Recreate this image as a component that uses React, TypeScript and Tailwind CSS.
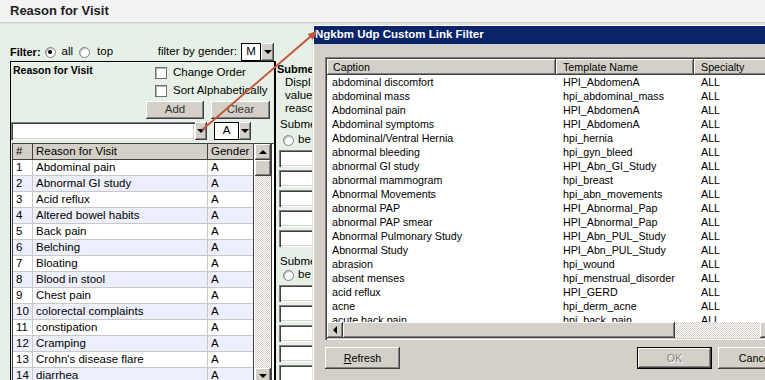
import React from "react";

const raised =
  "bg-[#d4d0c8] shadow-[inset_-1px_-1px_#404040,inset_1px_1px_#ffffff,inset_-2px_-2px_#808080]";
const sunken =
  "bg-white shadow-[inset_1px_1px_#808080,inset_2px_2px_#404040,inset_-1px_-1px_#ffffff,inset_-2px_-2px_#d4d0c8]";
const dither =
  "bg-[repeating-conic-gradient(#d4d0c8_0%_25%,#ffffff_0%_50%)] bg-[length:2px_2px]";

const reasons = [
  "Abdominal pain",
  "Abnormal GI study",
  "Acid reflux",
  "Altered bowel habits",
  "Back pain",
  "Belching",
  "Bloating",
  "Blood in stool",
  "Chest pain",
  "colorectal complaints",
  "constipation",
  "Cramping",
  "Crohn's disease flare",
  "diarrhea",
];

const links: [string, string][] = [
  ["abdominal discomfort", "HPI_AbdomenA"],
  ["abdominal mass", "hpi_abdominal_mass"],
  ["Abdominal pain", "HPI_AbdomenA"],
  ["Abdominal symptoms", "HPI_AbdomenA"],
  ["Abdominal/Ventral Hernia", "hpi_hernia"],
  ["abnormal bleeding", "hpi_gyn_bleed"],
  ["abnormal GI study", "HPI_Abn_GI_Study"],
  ["abnormal mammogram", "hpi_breast"],
  ["Abnormal Movements", "hpi_abn_movements"],
  ["abnormal PAP", "HPI_Abnormal_Pap"],
  ["abnormal PAP smear", "HPI_Abnormal_Pap"],
  ["Abnormal Pulmonary Study", "HPI_Abn_PUL_Study"],
  ["Abnormal Study", "HPI_Abn_PUL_Study"],
  ["abrasion", "hpi_wound"],
  ["absent menses", "hpi_menstrual_disorder"],
  ["acid reflux", "HPI_GERD"],
  ["acne", "hpi_derm_acne"],
  ["acute back pain", "hpi_back_pain"],
];

function Radio({ checked = false, className = "" }: { checked?: boolean; className?: string }) {
  return (
    <span
      className={`inline-flex h-[11px] w-[11px] shrink-0 items-center justify-center rounded-full border border-[#808080] bg-white shadow-[inset_1px_1px_#bdbdbd] ${className}`}
    >
      {checked && <span className="h-[4px] w-[4px] rounded-full bg-black" />}
    </span>
  );
}

function Checkbox() {
  return <span className="h-[12px] w-[12px] shrink-0 border border-[#6e6e6e] bg-white shadow-[inset_1px_1px_#b5b5b5]" />;
}

const TriDown = () => <span className="h-0 w-0 border-x-[4px] border-t-[4px] border-x-transparent border-t-black" />;
const TriUp = () => <span className="h-0 w-0 border-x-[4px] border-b-[4px] border-x-transparent border-b-black" />;
const TriLeft = () => <span className="h-0 w-0 border-y-[4px] border-r-[4px] border-y-transparent border-r-black" />;
const TriRight = () => <span className="h-0 w-0 border-y-[4px] border-l-[4px] border-y-transparent border-l-black" />;

function DropBtn({ className = "" }: { className?: string }) {
  return (
    <div className={`${raised} flex shrink-0 items-center justify-center ${className}`}>
      <TriDown />
    </div>
  );
}

export default function App() {
  return (
    <div className="relative h-[380px] w-[765px] overflow-hidden bg-[#e6f0e6] font-['Liberation_Sans',Arial,sans-serif] text-black">
      {/* page header */}
      <div className="flex h-[22px] items-center bg-[#f4f2f5] pl-[10px] text-[13px] font-bold text-[#1e1e1e]">
        Reason for Visit
      </div>
      <div className="h-[2px] bg-gradient-to-b from-[#cbc9cc] to-[#e4e2e5]" />

      <div className="pl-[10px]">
        {/* filter row */}
        <div className="mt-[19px] flex h-[18px] w-[264px] items-center text-[11.5px]">
          <span className="text-[11px] font-bold">Filter:</span>
          <Radio checked className="ml-[4px]" />
          <span className="ml-[6px]">all</span>
          <Radio className="ml-[6px]" />
          <span className="ml-[7px]">top</span>
          <span className="ml-auto mr-[4px]">filter by gender:</span>
          <div className="flex h-[18px]">
            <div className="flex w-[20px] items-center justify-center border border-black bg-white">M</div>
            <DropBtn className="w-[13px]" />
          </div>
        </div>

        <div className="flex">
          {/* reason for visit box */}
          <div className="h-[330px] w-[266px] shrink-0 border-y border-l border-r-2 border-black">
            <div className="h-[81px] text-[11.5px]">
              <div className="flex">
                <div className="w-[144px] pl-[2px] pt-[1px] text-[10.5px] font-bold leading-[14px]">Reason for Visit</div>
                <div className="flex flex-col gap-[6px] pt-[5px]">
                  <label className="flex h-[12px] items-center gap-[6px]">
                    <Checkbox />
                    Change Order
                  </label>
                  <label className="flex h-[12px] items-center gap-[6px]">
                    <Checkbox />
                    Sort Alphabetically
                  </label>
                </div>
              </div>
              <div className="mt-[4px] flex gap-[7px] pl-[135px]">
                <button className={`${raised} h-[18px] w-[58px] text-[#333]`}>Add</button>
                <button className={`${raised} h-[18px] w-[59px] text-[#333]`}>Clear</button>
              </div>
              <div className="mt-[3px] flex h-[18px]">
                <div className={`${sunken} w-[184px]`} />
                <DropBtn className="w-[12px]" />
                <div className="ml-[7px] flex w-[25px] items-center justify-center border border-black bg-white">A</div>
                <DropBtn className="w-[12px]" />
              </div>
            </div>

            {/* list */}
            <div className="ml-[1px] flex h-[241px] border-l border-t border-[#404040] bg-white text-[11.5px]">
              <div className="w-[241px] border-r border-[#404040]">
                <div className="flex h-[16px] border-b border-[#404040] bg-[#d4d0c8] leading-[15px]">
                  <div className="w-[20px] border-r border-[#404040] pl-[3px]">#</div>
                  <div className="w-[175px] border-r border-[#404040] pl-[3px]">Reason for Visit</div>
                  <div className="flex-1 pl-[3px]">Gender</div>
                </div>
                {reasons.map((r, i) => (
                  <div
                    key={r}
                    className={`flex h-[16px] border-b border-[#c8c8c8] leading-[15px] ${i % 2 ? "bg-[#edf0fc]" : "bg-white"}`}
                  >
                    <div className="w-[20px] border-r border-[#c8c8c8] pl-[3px]">{i + 1}</div>
                    <div className="w-[175px] border-r border-[#c8c8c8] pl-[3px]">{r}</div>
                    <div className="flex-1 pl-[3px]">A</div>
                  </div>
                ))}
              </div>
              <div className="w-[1px] bg-white" />
              <div className="flex w-[17px] flex-col border-r border-[#404040]">
                <div className={`${raised} flex h-[16px] items-center justify-center`}>
                  <TriUp />
                </div>
                <div className={`${raised} h-[16px]`} />
                <div className={`flex-1 ${dither}`} />
                <div className={`${raised} flex h-[16px] items-center justify-center`}>
                  <TriDown />
                </div>
              </div>
            </div>
          </div>

          {/* submenu panel, mostly hidden behind the dialog */}
          <div className="w-[36px] shrink-0 overflow-hidden whitespace-nowrap pl-[1px] text-[11.5px]">
            <div className="h-[15px] pt-[1px] text-[11px] font-bold leading-[14px]">Subme</div>
            <div className="pl-[8px] leading-[13px]">
              <div>Displ</div>
              <div>value</div>
              <div>reasc</div>
            </div>
            {[0, 1].map((g) => (
              <div key={g} className={g ? "mt-[8px]" : "mt-[3px]"}>
                <div className="pl-[3px] leading-[13px]">Subme</div>
                <div className={`flex h-[12px] items-center pl-[6px] ${g ? "mt-[1px]" : "mt-[3px]"}`}>
                  <Radio />
                  <span className="ml-[4px]">be</span>
                </div>
                <div className="mt-[4px] flex flex-col gap-[3px] pl-[2px]">
                  {[0, 1, 2, 3, 4].map((k) => (
                    <div key={k} className={`${sunken} h-[17px] w-[60px] shrink-0`} />
                  ))}
                </div>
              </div>
            ))}
          </div>
        </div>
      </div>

      {/* dialog window */}
      <div className="absolute left-[312px] top-[24px] h-[360px] w-[520px] bg-[#d4d0c8] p-[2px] shadow-[inset_1px_1px_#e4e2dc,inset_2px_2px_#ffffff]">
        <div className="flex h-[18px] items-center bg-[#0a246a] pl-[1px] text-[11.5px] font-bold text-white">
          Ngkbm Udp Custom Link Filter
        </div>
        <div className={`ml-[11px] mt-[13px] h-[283px] w-[470px] p-[2px] ${sunken}`}>
          <div className="flex h-[16px] text-[10.7px] leading-[16px]">
            <div className={`${raised} w-[229px] shrink-0 pl-[6px]`}>Caption</div>
            <div className={`${raised} w-[138px] shrink-0 pl-[7px]`}>Template Name</div>
            <div className={`${raised} flex-1 pl-[7px]`}>Specialty</div>
          </div>
          <div className="h-[247px] overflow-hidden bg-white text-[10.7px]">
            {links.map(([c, t]) => (
              <div key={c} className="flex h-[14px] leading-[14px]">
                <div className="w-[229px] shrink-0 pl-[5px]">{c}</div>
                <div className="w-[138px] shrink-0 pl-[7px]">{t}</div>
                <div className="flex-1 pl-[7px]">ALL</div>
              </div>
            ))}
          </div>
          <div className="flex h-[16px]">
            <div className={`${raised} flex w-[16px] shrink-0 items-center justify-center`}>
              <TriLeft />
            </div>
            <div className={`${raised} w-[332px] shrink-0`} />
            <div className={`w-[85px] shrink-0 ${dither}`} />
            <div className={`${raised} flex w-[16px] shrink-0 items-center justify-center`}>
              <TriRight />
            </div>
          </div>
        </div>
        <div className="ml-[11px] mt-[7px] flex text-[10.7px]">
          <button className={`${raised} h-[22px] w-[75px] shrink-0`}>
            <span className="underline">R</span>efresh
          </button>
          <button className="ml-[237px] h-[22px] w-[75px] shrink-0 border border-black">
            <div className={`${raised} flex h-full w-full items-center justify-center text-[#808080] [text-shadow:1px_1px_0_#ffffff]`}>
              OK
            </div>
          </button>
          <button className={`${raised} ml-[6px] h-[22px] w-[75px] shrink-0`}>Cancel</button>
        </div>
      </div>

      {/* callout arrow */}
      <svg className="pointer-events-none absolute left-0 top-0" width="765" height="380" viewBox="0 0 765 380">
        <line x1="202" y1="130" x2="310.5" y2="36.6" stroke="#c4573a" strokeWidth="2" />
        <polygon points="317,31 312.8,39.9 307.6,33.9" fill="#c4573a" />
      </svg>
    </div>
  );
}
